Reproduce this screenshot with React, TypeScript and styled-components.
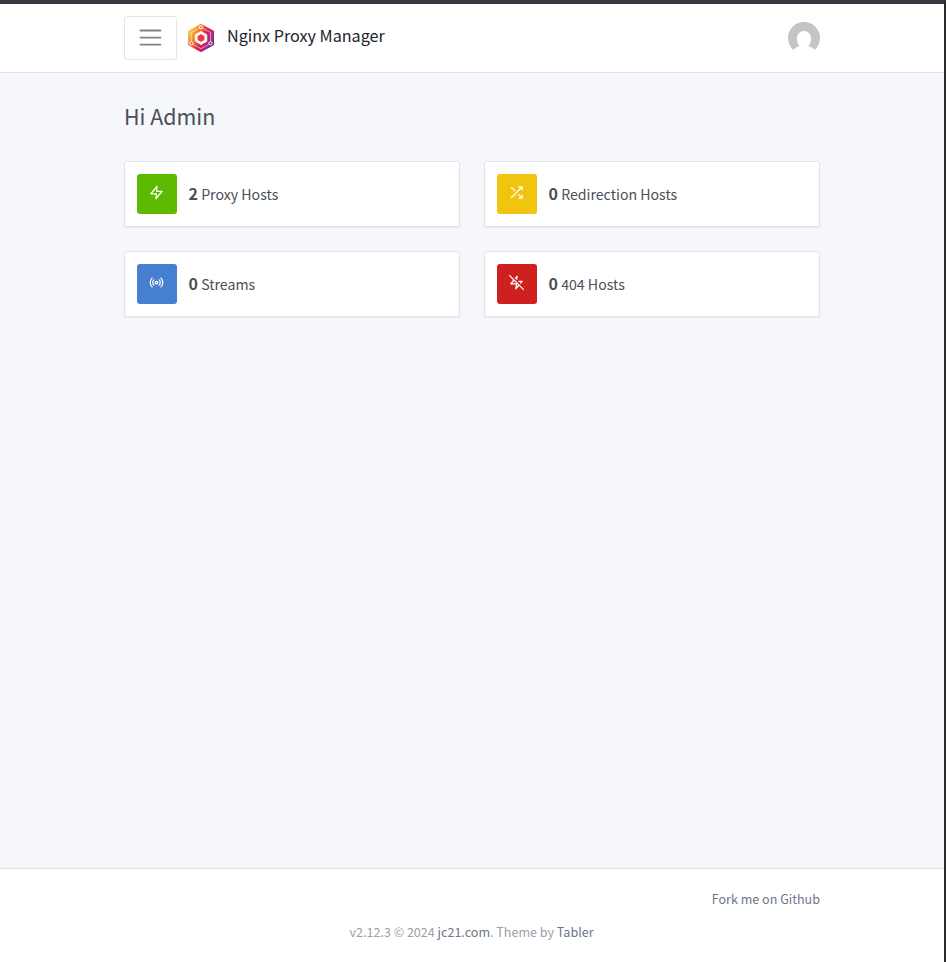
import React from 'react';
import styled, { createGlobalStyle } from 'styled-components';

const GlobalStyle = createGlobalStyle`
  *, *::before, *::after { box-sizing: border-box; }
  body {
    margin: 0;
    background: #f5f7fb;
    color: #495057;
    font-family: "Noto Sans CJK SC", "Open Sans", sans-serif;
    font-size: 13px;
    line-height: 24px;
  }
`;

const Window = styled.div`
  display: flex;
  flex-direction: column;
  height: 962px;
  width: 946px;
  overflow: hidden;
  border-top: 4px solid #38363e;
  border-right: 2px solid #2b2a2b;
`;

const Container = styled.div`
  width: 696px;
  margin: 0 auto 0 124px;
`;

const Header = styled.header`
  height: 69px;
  padding-top: 12px;
  background: #fff;
  border-bottom: 1px solid #dee2e9;
`;

const HeaderRow = styled(Container)`
  display: flex;
  align-items: center;
  height: 44px;
`;

const MenuButton = styled.button`
  display: flex;
  align-items: center;
  justify-content: center;
  width: 53px;
  height: 44px;
  padding: 0;
  background: #fff;
  border: 1px solid #e4e5e7;
  border-radius: 3px;
`;

const Brand = styled.a`
  display: flex;
  align-items: center;
  margin-left: 10px;
  color: #212529;
  font-size: 16.15px;
`;

const BrandName = styled.span`
  margin: 0 0 6px 12px;
  white-space: nowrap;
`;

const Avatar = styled.span`
  display: flex;
  width: 32px;
  height: 32px;
  margin-left: auto;
`;

const Main = styled.main`
  flex: 1;
  padding-top: 26px;
`;

const Title = styled.h1`
  margin: 0;
  height: 62px;
  font-size: 21.4px;
  font-weight: 400;
  line-height: 34px;
`;

const CardGrid = styled.div`
  display: grid;
  grid-template-columns: 1fr 1fr;
  gap: 24px;
`;

const Card = styled.a`
  display: flex;
  align-items: center;
  height: 66px;
  padding: 12px;
  background: #fff;
  border: 1px solid #dee2ec;
  border-radius: 3px;
  box-shadow: 0 1px 2px rgba(0, 0, 0, 0.05);
`;

const Stamp = styled.span<{ $color: string }>`
  display: flex;
  align-items: center;
  justify-content: center;
  width: 40px;
  height: 40px;
  padding: 0 1px 3px 0;
  border-radius: 3px;
  background: ${({ $color }) => $color};
`;

const CardLabel = styled.span`
  margin: 0 0 2px 11.5px;
  font-size: 14.15px;
  white-space: pre;
`;

const Count = styled.b`
  font-size: 16px;
`;

const Footer = styled.footer`
  height: 94px;
  padding-top: 18px;
  background: #fff;
  border-top: 1px solid #dee2e9;
  color: #9aa0ac;
  font-size: 12.55px;
`;

const FooterLinks = styled.div`
  height: 33px;
  text-align: right;
`;

const Copyright = styled.div`
  padding-right: 1px;
  text-align: center;
`;

const FooterLink = styled.a`
  color: #6e7687;
`;

const GlyphSvg = styled.svg`
  display: block;
  fill: none;
  stroke: #fff;
  stroke-width: 2;
  stroke-linecap: round;
  stroke-linejoin: round;
`;

const Glyph = ({ children }: { children: React.ReactNode }) => (
  <GlyphSvg width="15" height="15" viewBox="0 0 24 24">{children}</GlyphSvg>
);

const Logo = () => (
  <svg width="28" height="30" viewBox="0 0 28 30">
    <defs>
      <linearGradient id="warm" x1="0" y1="0.2" x2="1" y2="0.8">
        <stop offset="0" stopColor="#fde047" />
        <stop offset="0.3" stopColor="#f6822f" />
        <stop offset="0.55" stopColor="#df2148" />
        <stop offset="0.8" stopColor="#a7268b" />
        <stop offset="1" stopColor="#55308f" />
      </linearGradient>
    </defs>
    <path d="M14 .8 27 8v14L14 29.2 1 22V8z" fill="url(#warm)" />
    <path d="M14 4.3 23.6 9.6v10.8L14 25.7 4.4 20.4V9.6z" fill="none" stroke="#fff" strokeWidth="0.9" opacity=".6" />
    <path d="m14 8.4 5.8 3.3v6.6L14 21.600l-5.800-3.300v-6.600z" fill="#fff" stroke="#fff" strokeWidth="0.8" strokeLinejoin="round" />
    <path d="m14 11.600 3 1.700v3.400l-3 1.700-3-1.700v-3.400z" fill="#f0383c" stroke="#f0383c" strokeWidth="0.9" strokeLinejoin="round" />
    <g stroke="#fff" strokeWidth="1">
      <circle cx="14" cy="4.3" r="1.6" fill="#f47a36" />
      <circle cx="4.5" cy="20.3" r="1.6" fill="#ef6340" />
      <circle cx="23.5" cy="20.3" r="1.6" fill="#6c2c8f" />
    </g>
  </svg>
);

const cards = [
  {
    count: 2, label: 'Proxy Hosts', color: '#5eba00',
    icon: <polygon points="13 2 3 14 12 14 11 22 21 10 12 10 13 2" />,
  },
  {
    count: 0, label: 'Redirection Hosts', color: '#f1c40f',
    icon: <path d="M16 3h5v5M4 20 21 3M21 16v5h-5M15 15l6 6M4 4l5 5" />,
  },
  {
    count: 0, label: 'Streams', color: '#467fcf',
    icon: (
      <>
        <circle cx="12" cy="12" r="2" />
        <path d="M16.24 7.76a6 6 0 0 1 0 8.49m-8.48-.01a6 6 0 0 1 0-8.49m11.31-2.82a10 10 0 0 1 0 14.14m-14.14 0a10 10 0 0 1 0-14.14" />
      </>
    ),
  },
  {
    count: 0, label: '404 Hosts', color: '#cd201f',
    icon: <path d="M12.41 6.75 13 2l-2.43 2.92M18.57 12.91 21 10h-5.34M8 8l-5 6h9l-1 8 5-6M1 1l22 22" />,
  },
];

export default function App() {
  return (
    <>
      <GlobalStyle />
      <Window>
        <Header>
          <HeaderRow>
            <MenuButton aria-label="Menu">
              <svg width="23" height="20" viewBox="0 0 23 20">
                <path d="M1.500 2.5h20M1.500 9.6h20M1.500 16.700h20" stroke="#858287" strokeWidth="1.8" strokeLinecap="round" />
              </svg>
            </MenuButton>
            <Brand>
              <Logo />
              <BrandName>Nginx Proxy Manager</BrandName>
            </Brand>
            <Avatar>
              <svg width="32" height="32" viewBox="0 0 32 32">
                <path d="M5.5 28A16 16 0 1 1 26.5 28Q25 25 20.3 24.2C22 22.5 23 19.7 23 16.8 23 12 20 9 16 9s-7 3-7 7.8c0 2.9 1 5.7 2.7 7.4Q7 25 5.5 28z" fill="#c4c4c4" />
              </svg>
            </Avatar>
          </HeaderRow>
        </Header>
        <Main>
          <Container>
            <Title>Hi Admin</Title>
            <CardGrid>
              {cards.map((card) => (
                <Card key={card.label}>
                  <Stamp $color={card.color}><Glyph>{card.icon}</Glyph></Stamp>
                  <CardLabel><Count>{card.count}</Count> {card.label}</CardLabel>
                </Card>
              ))}
            </CardGrid>
          </Container>
        </Main>
        <Footer>
          <Container>
            <FooterLinks><FooterLink>Fork me on Github</FooterLink></FooterLinks>
            <Copyright>
              v2.12.3 © 2024 <FooterLink>jc21.com</FooterLink>. Theme by <FooterLink>Tabler</FooterLink>
            </Copyright>
          </Container>
        </Footer>
      </Window>
    </>
  );
}
